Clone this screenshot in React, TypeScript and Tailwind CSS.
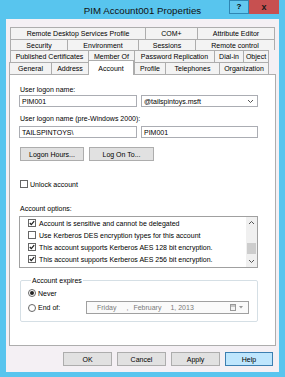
import React from 'react';

const FONT = { fontFamily: '"Liberation Sans", Arial, sans-serif' };

const tabRows: { label: string; w: string; selected?: boolean }[][] = [
  [
    { label: 'Remote Desktop Services Profile', w: 'w-[135px]' },
    { label: 'COM+', w: 'w-[52px]' },
    { label: 'Attribute Editor', w: 'w-[78px]' },
  ],
  [
    { label: 'Security', w: 'w-[57px]' },
    { label: 'Environment', w: 'w-[71px]' },
    { label: 'Sessions', w: 'w-[57px]' },
    { label: 'Remote control', w: 'w-[80px]' },
  ],
  [
    { label: 'Published Certificates', w: 'w-[78px]' },
    { label: 'Member Of', w: 'w-[46px]' },
    { label: 'Password Replication', w: 'w-[80px]' },
    { label: 'Dial-in', w: 'w-[29px]' },
    { label: 'Object', w: 'w-[26px]' },
  ],
  [
    { label: 'General', w: 'w-[42px]' },
    { label: 'Address', w: 'w-[37px]' },
    { label: 'Account', w: 'w-[46px]', selected: true },
    { label: 'Profile', w: 'w-[31px]' },
    { label: 'Telephones', w: 'w-[54px]' },
    { label: 'Organization', w: 'w-[50px]' },
  ],
];

const rowClasses = ['h-[12px] ml-px', 'h-[11px] ml-px', 'h-[12px] ml-px', 'h-[12px]'];

// last row is scrolled mostly out of view, only its box peeks in
const accountOptions = [
  { label: 'Account is sensitive and cannot be delegated', checked: true },
  { label: 'Use Kerberos DES encryption types for this account', checked: false },
  { label: 'This account supports Kerberos AES 128 bit encryption.', checked: true },
  { label: 'This account supports Kerberos AES 256 bit encryption.', checked: true },
  { label: '', checked: false },
];

function CheckBox({ checked }: { checked: boolean }) {
  return (
    <div className="flex h-[8px] w-[8px] shrink-0 items-center justify-center border border-[#666] bg-white">
      {checked && (
        <svg width="6" height="6" viewBox="0 0 6 6">
          <path d="M0.8 3 L2.3 4.6 L5.2 1.2" fill="none" stroke="#222" strokeWidth="1.3" />
        </svg>
      )}
    </div>
  );
}

function Radio({ checked }: { checked: boolean }) {
  return (
    <div className="flex h-[8px] w-[8px] shrink-0 items-center justify-center rounded-full border border-[#666] bg-white">
      {checked && <div className="h-[4px] w-[4px] rounded-full bg-[#222]" />}
    </div>
  );
}

function Chevron({ up }: { up?: boolean }) {
  return (
    <svg width="7" height="5" viewBox="0 0 7 5">
      <path d={up ? 'M1 4 L3.5 1.5 L6 4' : 'M1 1 L3.5 3.5 L6 1'} fill="none" stroke="#555" strokeWidth="1" />
    </svg>
  );
}

function Button({ label, help }: { label: string; help?: boolean }) {
  return (
    <div
      className={`flex h-[14px] items-center justify-center border text-[7px] leading-none text-black ${
        help ? 'w-[48px] border-[#3c7fb1] bg-[#bee6fd]' : 'w-[49px] border-[#adadad] bg-[#e1e1e1]'
      }`}
    >
      {label}
    </div>
  );
}

export default function App() {
  return (
    <div className="flex h-[377px] w-[285px] flex-col bg-[#58c5ee] text-black" style={FONT}>
      {/* title bar */}
      <div className="flex h-[19px] shrink-0 items-start">
        <div className="w-[56px]" />
        <div className="flex-1 text-center text-[9.7px] leading-[21px] text-[#111]">PIM Account001 Properties</div>
        <div className="flex w-[56px]">
          <div className="flex h-[14px] w-[20px] items-center justify-center border border-[#2f86b3] bg-[#63c8f0] text-[8px] font-bold leading-none">
            ?
          </div>
          <div className="flex h-[14px] w-[30px] items-center justify-center bg-[#c75050] text-[9px] font-bold leading-none text-[#1a1a1a]">
            x
          </div>
        </div>
      </div>

      {/* client */}
      <div className="mx-[6px] flex h-[353px] flex-col bg-[#f4f0f4] px-[3px] pt-[8px] text-[7px] leading-[9px]">
        {/* tabs */}
        <div className="flex flex-col">
          {tabRows.map((row, ri) => (
            <div key={ri} className={`flex items-start ${rowClasses[ri]}`}>
              {row.map((t, ti) =>
                t.selected ? (
                  <div
                    key={t.label}
                    className={`relative z-10 -mt-[2px] flex h-[15px] items-start justify-center border-x border-t border-[#adadad] bg-white pt-[3px] ${t.w}`}
                  >
                    {t.label}
                  </div>
                ) : (
                  <div
                    key={t.label}
                    className={`flex h-full items-center justify-center whitespace-nowrap border-l border-t border-[#adadad] bg-[#f3f3f3] ${t.w} ${
                      ti === row.length - 1 ? 'border-r' : ''
                    }`}
                  >
                    {t.label}
                  </div>
                ),
              )}
            </div>
          ))}
        </div>

        {/* panel */}
        <div className="flex h-[272px] w-[267px] flex-col border border-[#adadad] bg-white pl-[9px] pr-[17px]">
          <div className="ml-px mt-[10px] h-[9px]">User logon name:</div>
          <div className="mt-px flex h-[12px] gap-[4px]">
            <div className="flex w-[118px] items-center border border-[#abadb3] bg-white pl-[2px]">PIM001</div>
            <div className="flex flex-1 items-center justify-between border border-[#abadb3] bg-white pl-[2px] pr-[3px]">
              <span>@tailspintoys.msft</span>
              <Chevron />
            </div>
          </div>
          <div className="ml-px mt-[7px] h-[9px]">User logon name (pre-Windows 2000):</div>
          <div className="mt-[3px] flex h-[12px] gap-[4px]">
            <div className="flex w-[118px] items-center border border-[#abadb3] bg-white pl-[2px]">TAILSPINTOYS\</div>
            <div className="flex flex-1 items-center border border-[#abadb3] bg-white pl-[2px]">PIM001</div>
          </div>
          <div className="ml-px mt-[9px] flex h-[14px] gap-[5px]">
            <div className="flex w-[64px] items-center justify-center border border-[#adadad] bg-[#e1e1e1]">
              Logon Hours...
            </div>
            <div className="flex w-[65px] items-center justify-center border border-[#adadad] bg-[#e1e1e1]">
              Log On To...
            </div>
          </div>

          <div className="ml-px mt-[19px] flex h-[8px] items-center gap-[2px]">
            <CheckBox checked={false} />
            <span>Unlock account</span>
          </div>

          <div className="ml-px mt-[16px] h-[9px]">Account options:</div>
          <div className="mt-[3px] flex h-[52px] w-[239px] overflow-hidden border border-[#a0a0a0] bg-white">
            <div className="flex flex-1 flex-col overflow-hidden pl-[8px]">
              {accountOptions.map((o, i) => (
                <div key={i} className="flex h-[12px] shrink-0 items-center gap-[3px] whitespace-nowrap">
                  <CheckBox checked={o.checked} />
                  {o.label && <span>{o.label}</span>}
                </div>
              ))}
            </div>
            <div className="flex w-[11px] shrink-0 flex-col bg-[#f0f0f0]">
              <div className="flex h-[11px] items-center justify-center">
                <Chevron up />
              </div>
              <div className="flex-1 px-px pt-[15px]">
                <div className="h-[11px] bg-[#cdcdcd]" />
              </div>
              <div className="flex h-[11px] items-center justify-center">
                <Chevron />
              </div>
            </div>
          </div>

          <fieldset className="ml-px mt-[8px] w-[238px] rounded-[2px] border border-[#d5dfe5] pb-[7px] pl-[7px]">
            <legend className="ml-[3px] px-px leading-[9px]">Account expires</legend>
            <div className="mt-[4px] flex h-[8px] items-center gap-[2px]">
              <Radio checked />
              <span>Never</span>
            </div>
            <div className="mt-[4px] flex h-[13px] items-center">
              <Radio checked={false} />
              <span className="ml-[2px] w-[48px]">End of:</span>
              <div className="flex h-[13px] w-[163px] items-center border border-[#a0a0a0] bg-[#fafafa] pl-[10px] pr-[5px] text-[#7a7a7a]">
                <span>Friday</span>
                <span className="ml-[10px]">,</span>
                <span className="ml-[5px]">February</span>
                <span className="ml-[9px]">1, 2013</span>
                <div className="ml-auto flex items-center gap-[3px]">
                  <svg width="6" height="7" viewBox="0 0 6 7">
                    <rect x="0.5" y="0.5" width="5" height="6" fill="#f4f4f4" stroke="#999" />
                    <line x1="0.5" y1="2" x2="5.5" y2="2" stroke="#999" />
                  </svg>
                  <svg width="4" height="3" viewBox="0 0 4 3">
                    <path d="M0 0 L4 0 L2 2.5 Z" fill="#999" />
                  </svg>
                </div>
              </div>
            </div>
          </fieldset>
        </div>

        {/* dialog buttons */}
        <div className="mt-[6px] flex justify-end gap-[5px] pr-[3px]">
          <Button label="OK" />
          <Button label="Cancel" />
          <Button label="Apply" />
          <Button label="Help" help />
        </div>
      </div>
    </div>
  );
}
